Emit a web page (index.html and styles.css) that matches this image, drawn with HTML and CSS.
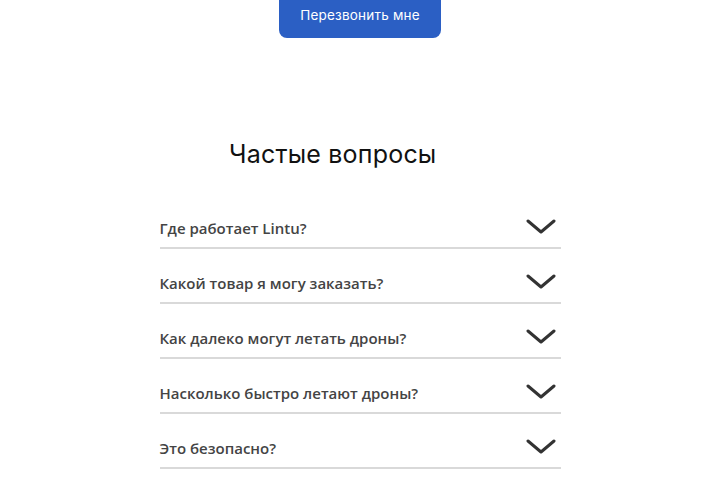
FILE: index.html
```html
<!DOCTYPE html>
<html lang="ru">
<head>
  <meta charset="UTF-8">
  <meta name="viewport" content="width=device-width, initial-scale=1">
  <title>Lintu - Частые вопросы</title>
  <link rel="stylesheet" href="styles.css">
</head>
<body>
  <div class="callback">
    <button class="callback-btn">Перезвонить мне</button>
  </div>

  <section class="faq">
    <h2 class="faq-title">Частые вопросы</h2>
    <div class="faq-list">
      <div class="faq-item">
        <span class="faq-question">Где работает Lintu?</span>
        <svg class="faq-arrow" viewBox="0 0 30 16"><path d="M2 2 L15 13 L28 2"/></svg>
      </div>
      <div class="faq-item">
        <span class="faq-question">Какой товар я могу заказать?</span>
        <svg class="faq-arrow" viewBox="0 0 30 16"><path d="M2 2 L15 13 L28 2"/></svg>
      </div>
      <div class="faq-item">
        <span class="faq-question">Как далеко могут летать дроны?</span>
        <svg class="faq-arrow" viewBox="0 0 30 16"><path d="M2 2 L15 13 L28 2"/></svg>
      </div>
      <div class="faq-item">
        <span class="faq-question">Насколько быстро летают дроны?</span>
        <svg class="faq-arrow" viewBox="0 0 30 16"><path d="M2 2 L15 13 L28 2"/></svg>
      </div>
      <div class="faq-item">
        <span class="faq-question">Это безопасно?</span>
        <svg class="faq-arrow" viewBox="0 0 30 16"><path d="M2 2 L15 13 L28 2"/></svg>
      </div>
    </div>
  </section>
</body>
</html>
```

FILE: styles.css
```css
body {
  margin: 0;
  padding: 0;
  background: #fff;
  font-family: 'Open Sans', Arial, sans-serif;
  color: #333;
}

.callback {
  display: flex;
  justify-content: center;
  margin-top: -12px;
}

.callback-btn {
  width: 162px;
  height: 50px;
  padding-top: 4px;
  border: none;
  border-radius: 8px;
  background: #2b5fc4;
  color: #fff;
  font-family: 'Inter', Arial, sans-serif;
  font-size: 13.5px;
  font-weight: 400;
  letter-spacing: 0.2px;
  cursor: pointer;
}

.faq {
  padding-top: 101px;
}

.faq-title {
  margin: 0 0 25px 229px;
  font-family: 'Inter', Arial, sans-serif;
  font-size: 25px;
  line-height: 30px;
  font-weight: 400;
  letter-spacing: 0.2px;
  color: #111;
}

.faq-list {
  width: 401px;
  margin: 0 auto;
}

.faq-item {
  display: flex;
  align-items: flex-end;
  justify-content: space-between;
  height: 44px;
  padding-bottom: 9px;
  border-bottom: 2px solid #d9d9d9;
}

.faq-question {
  font-size: 15px;
  line-height: 20px;
  font-weight: 600;
  color: #444;
}

.faq-arrow {
  width: 30px;
  height: 16px;
  margin-right: 5px;
  margin-bottom: 3px;
  fill: none;
  stroke: #333;
  stroke-width: 3;
  stroke-linecap: round;
  stroke-linejoin: round;
}
```
